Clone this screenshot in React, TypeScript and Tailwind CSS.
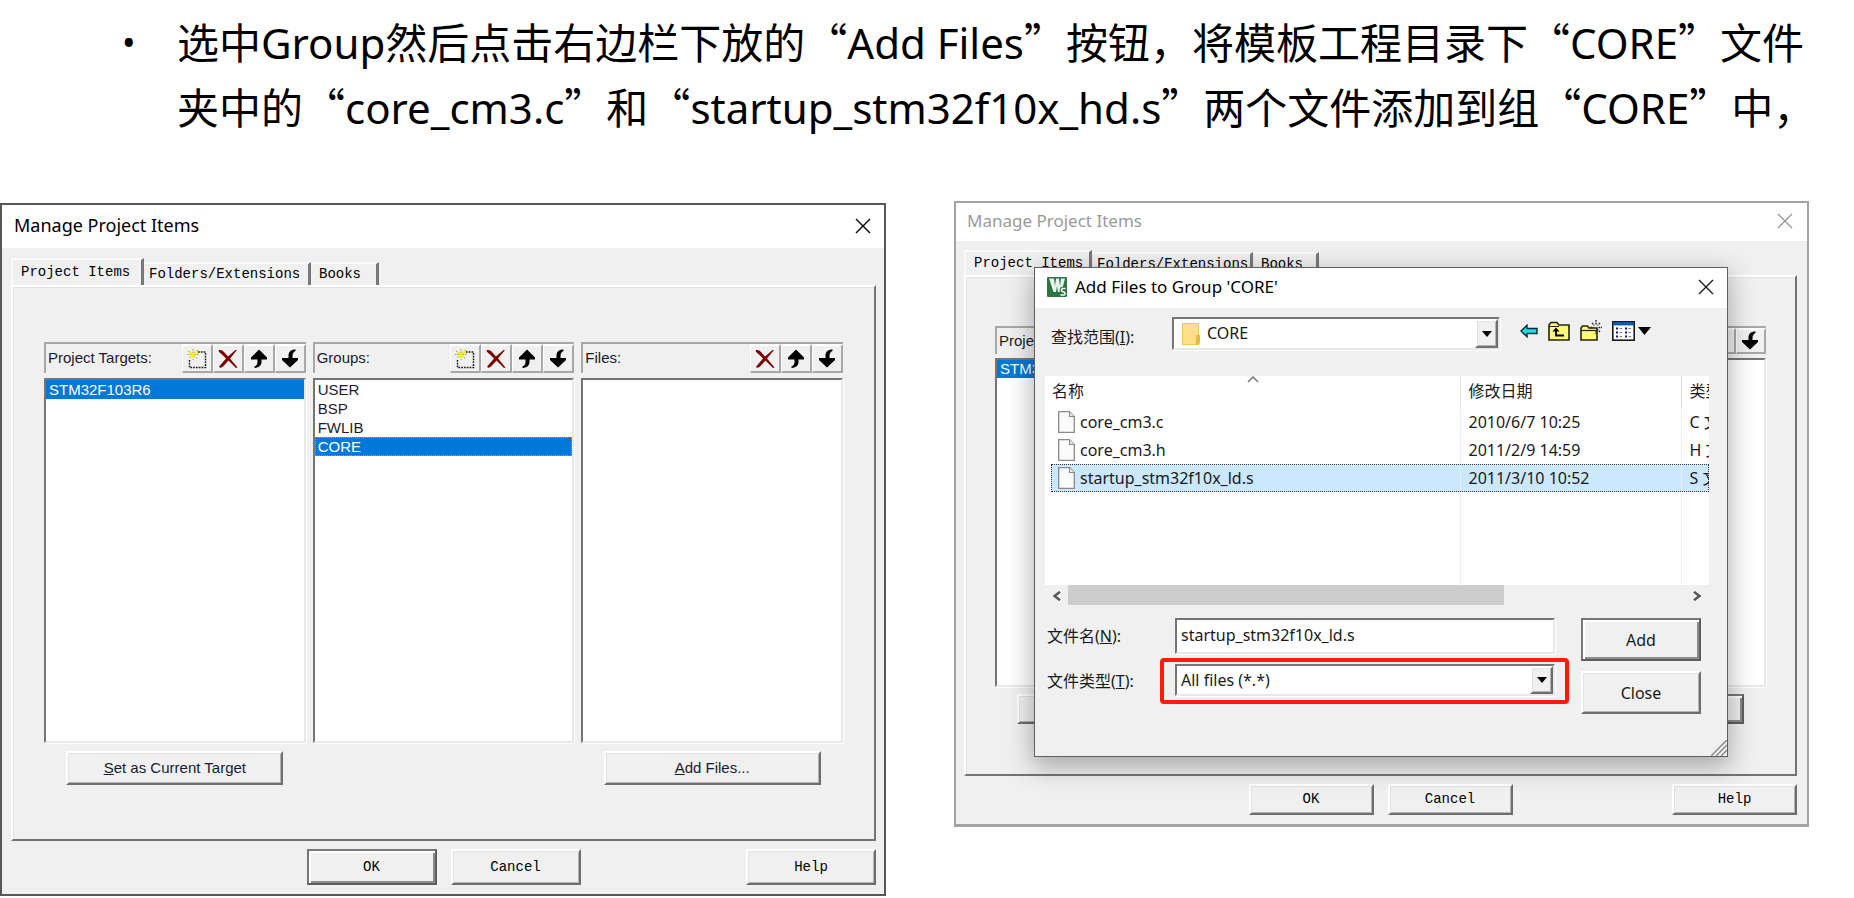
import React from "react";

const UI = "font-['Noto_Sans','Noto_Sans_CJK_SC',sans-serif]";
const CJK = "font-['Noto_Sans_CJK_SC',sans-serif]";
const MONO = "font-['Liberation_Mono',monospace]";
const RAISED =
  "border-2 border-t-white border-l-white border-r-[#6e6e6e] border-b-[#6e6e6e] bg-[#f0f0f0] shadow-[inset_1px_1px_0_#e2e2e2,inset_-1px_-1px_0_#b4b4b4]";
const DEFAULT_BTN =
  "border-2 border-t-[#777] border-l-[#777] border-r-[#5e5e5e] border-b-[#5e5e5e] bg-[#f0f0f0] shadow-[inset_2px_2px_0_#fff,inset_-2px_-2px_0_#8c8c8c]";
const SUNKEN =
  "border-2 border-t-[#757575] border-l-[#757575] border-r-[#e8e8e8] border-b-[#e8e8e8] bg-white shadow-[1px_1px_0_#fff]";

function CloseIcon() {
  return (
    <svg viewBox="0 0 16 16" className="size-4" fill="none" stroke="currentColor" strokeWidth="1.4" aria-hidden="true">
      <path d="M1 1 15 15M15 1 1 15" />
    </svg>
  );
}

function NewIcon() {
  return (
    <svg viewBox="0 0 20 20" className="size-5" fill="none" aria-hidden="true">
      <path d="M11 3H18.500V18.500H2.500V10" stroke="#222" strokeWidth="1.500" strokeDasharray="1.800 1" />
      <path d="M1 2 11 10M6 0V11M11 1 2 9M0 5.500H12" stroke="#8d8d6a" strokeWidth="0.9" strokeDasharray="1.5 1" />
      <path d="M2 2.500 8 8M10 2 3 8M6 4V9M8 3.500H11" stroke="#f4f01c" strokeWidth="1.9" />
    </svg>
  );
}

function DeleteIcon() {
  return (
    <svg viewBox="0 0 20 20" className="size-5" aria-hidden="true">
      <path
        d="M.5 1.500C2 .5 4.500 1.200 6 3L10 7.500 17.500 1 19 1 12 9.500 19.500 18.500 18 19 10.500 11.500 5 17.500C3.500 19 1 19 1.200 17.500L8 9.500 4 5.500C2.500 4 .5 3 .5 1.500Z"
        fill="#7d0000"
      />
    </svg>
  );
}

function UpIcon() {
  return (
    <svg viewBox="0 0 20 20" className="size-5" aria-hidden="true">
      <path d="M10 .5 18 8.500V10.500H12.500V13C12.500 16 10.500 18.500 5.500 19V17.500C7.500 16.500 8.500 15 8.500 13V10.500H2V8.500Z" fill="#000" />
    </svg>
  );
}

function DownIcon() {
  return (
    <svg viewBox="0 0 20 20" className="size-5" aria-hidden="true">
      <path d="M10 18.500 18 11V9H12.500V7C12.500 4.500 13.500 3 15.500 2V.5C10.500 .5 8.500 3 8.500 7V9H2V11Z" fill="#000" />
    </svg>
  );
}

const TOOLS = {
  new: { label: "New", icon: <NewIcon /> },
  del: { label: "Delete", icon: <DeleteIcon /> },
  up: { label: "Move up", icon: <UpIcon /> },
  down: { label: "Move down", icon: <DownIcon /> },
};
type Tool = keyof typeof TOOLS;

function Column({
  title,
  tools,
  items,
  selected,
  focused,
  compact,
  action,
}: {
  title: string;
  tools: Tool[];
  items: string[];
  selected?: string;
  focused?: boolean;
  compact?: boolean;
  action?: React.ReactNode;
}) {
  return (
    <section className="flex min-w-0 flex-1 flex-col">
      <div
        className={`flex items-end justify-between border-t-2 border-l-2 border-[#a8a8a8] ${compact ? "h-[28px]" : "h-[31px]"}`}
      >
        <h3 className="self-center pl-[2px] whitespace-nowrap">{title}</h3>
        <div className="flex h-full">
          {tools.map((t) => (
            <button
              key={t}
              type="button"
              aria-label={TOOLS[t].label}
              className={`flex h-full items-center justify-center border-t-2 border-r-2 border-b-2 border-l border-t-white border-l-white border-r-[#a8a8a8] border-b-[#a8a8a8] ${compact ? "w-[30px]" : "w-[31px]"}`}
            >
              {TOOLS[t].icon}
            </button>
          ))}
        </div>
      </div>
      <ul
        role="listbox"
        aria-label={title}
        className={`${SUNKEN} ${compact ? "mt-[4px] h-[329px] leading-[18px]" : "mt-[5px] h-[365px] leading-[19px]"}`}
      >
        {items.map((it) => (
          <li
            key={it}
            role="option"
            aria-selected={it === selected}
            className={`pl-[3px] ${it === selected ? "bg-[#0078d7] text-white" : ""} ${focused && it === selected ? "outline-1 -outline-offset-1 outline-[#e08a3c] outline-dotted" : ""}`}
          >
            {it}
          </li>
        ))}
      </ul>
      <div className={`flex justify-center ${compact ? "h-[37px] pt-[7px]" : "h-[42px] pt-[8px]"}`}>{action}</div>
    </section>
  );
}

function ManageDialog({
  compact,
  groups,
  selectedGroup,
  children,
}: {
  compact?: boolean;
  groups: string[];
  selectedGroup?: string;
  children?: React.ReactNode;
}) {
  const tabs = ["Project Items", "Folders/Extensions", "Books"];
  const footBtn = `${compact ? "h-[31px] w-[125px]" : "h-[36px] w-[130px]"}`;
  const rowBtn = `${compact ? "w-[209px]" : "w-[217px]"} h-full`;
  return (
    <section
      aria-label="Manage Project Items"
      className={`relative border-2 bg-[#f0f0f0] ${compact ? "mt-0 border-b-[3px] border-[#a3a3a3]" : "mt-[2px] border-[#585858]"}`}
    >
      <header
        className={`flex items-center justify-between bg-white ${UI} ${compact ? "h-[38px] pr-[14px] pb-[2px] pl-[11px] text-[17px] text-[#9a9a9a]" : "h-[43px] pr-[13px] pb-[2px] pl-[12px] text-[18px] text-black"}`}
      >
        <h2>Manage Project Items</h2>
        <button type="button" aria-label="Close">
          <CloseIcon />
        </button>
      </header>
      <div className={compact ? "pt-[9px] pr-[10px] pl-[8px]" : "pt-[10px] pr-[8px] pl-[9px]"}>
        <div role="tablist" className={`flex items-end text-[14px] ${MONO} ${compact ? "h-[25px]" : "h-[27px]"}`}>
          {tabs.map((t, i) => (
            <button
              key={t}
              type="button"
              role="tab"
              aria-selected={i === 0}
              className={`border-t-2 border-r-[3px] border-t-[#fafafa] border-r-[#787878] bg-[#f0f0f0] text-left whitespace-nowrap ${
                i === 0
                  ? `z-10 h-full self-start border-l-2 border-l-[#fafafa] pl-[8px] ${compact ? "w-[128px]" : "w-[133px]"}`
                  : i === 1
                    ? `h-[23px] pl-[5px] ${compact ? "w-[161px]" : "w-[167px]"}`
                    : `h-[23px] pl-[8px] ${compact ? "w-[66px]" : "w-[68px]"}`
              }`}
            >
              {t}
            </button>
          ))}
        </div>
        <div
          role="tabpanel"
          className={`border-2 border-t-white border-r-[#747474] border-b-[#747474] border-l-white shadow-[inset_1px_1px_0_#e2e2e2] ${compact ? "px-[29px] pt-[49px] pb-[50px]" : "px-[31px] pt-[55px] pb-[54px]"}`}
        >
          <div className="flex gap-[7px] font-['Liberation_Sans',Arial,sans-serif] text-[15px] text-[#1b1b2b]">
            <Column
              compact={compact}
              title="Project Targets:"
              tools={["new", "del", "up", "down"]}
              items={["STM32F103R6"]}
              selected="STM32F103R6"
              action={
                <button type="button" className={`${rowBtn} ${RAISED}`}>
                  <u>S</u>et as Current Target
                </button>
              }
            />
            <Column
              compact={compact}
              title="Groups:"
              tools={["new", "del", "up", "down"]}
              items={groups}
              selected={selectedGroup}
              focused
            />
            <Column
              compact={compact}
              title="Files:"
              tools={["del", "up", "down"]}
              items={[]}
              action={
                <button type="button" className={`${rowBtn} ${compact ? DEFAULT_BTN : RAISED}`}>
                  <u>A</u>dd Files...
                </button>
              }
            />
          </div>
        </div>
        <footer className={`grid grid-cols-[1fr_auto_1fr] pt-[8px] pb-[9px] text-[14px] ${MONO}`}>
          <div className="col-start-2 flex gap-[14px]">
            <button type="button" className={`${footBtn} ${compact ? RAISED : DEFAULT_BTN}`}>
              OK
            </button>
            <button type="button" className={`${footBtn} ${RAISED}`}>
              Cancel
            </button>
          </div>
          <button type="button" className={`justify-self-end ${footBtn} ${RAISED}`}>
            Help
          </button>
        </footer>
      </div>
      {children}
    </section>
  );
}

function DropArrow() {
  return (
    <span className={`pointer-events-none flex w-[23px] shrink-0 items-center justify-center self-stretch ${RAISED}`}>
      <svg viewBox="0 0 10 6" className="h-[6px] w-[10px]" aria-hidden="true">
        <path d="M0 0H10L5 6Z" fill="#000" />
      </svg>
    </span>
  );
}

function FileIcon() {
  return (
    <svg viewBox="0 0 17 22" className="h-[22px] w-[17px] shrink-0" aria-hidden="true">
      <path d="M.7.7H11.500L16.300 5.500V21.300H.7Z" fill="#fbfbfb" stroke="#8a8a8a" strokeWidth="1.300" />
      <path d="M11.500.7V5.500H16.300" fill="#e9e9e9" stroke="#8a8a8a" strokeWidth="1.100" />
    </svg>
  );
}

function NavIcons() {
  return (
    <div className="flex items-center gap-[10px] pb-[6px]">
      <button type="button" aria-label="Back">
        <svg viewBox="0 0 18 14" className="h-[14px] w-[18px]" aria-hidden="true">
          <path d="M1 7 7 1.200V4.500H17V9.500H7V12.800Z" fill="#12e4ee" stroke="#0a2a30" strokeWidth="1.400" />
        </svg>
      </button>
      <button type="button" aria-label="Up one level">
        <svg viewBox="0 0 22 20" className="h-[20px] w-[22px]" aria-hidden="true">
          <path d="M1 19V4L3 1.500H9L11 4H21V19Z" fill="#fbf87a" stroke="#26260a" strokeWidth="1.600" />
          <path d="M1 5.500H11" stroke="#26260a" strokeWidth="1" />
          <path d="M4.500 10.500 8 6.500 11.500 10.500Z" fill="#000" />
          <path d="M8 9V14.500H16" fill="none" stroke="#000" strokeWidth="1.800" />
        </svg>
      </button>
      <button type="button" aria-label="New folder">
        <svg viewBox="0 0 22 22" className="h-[22px] w-[22px]" aria-hidden="true">
          <path d="M1 20V8L2.500 6H7.500L9 8H17V20Z" fill="#fbf87a" stroke="#26260a" strokeWidth="1.600" />
          <path d="M1 10.500H17" stroke="#26260a" strokeWidth="1.200" />
          <path
            d="M16 0V5M16 10V14M10.500 7.500H13.500M18.500 7.500H22M12 3 14.500 5.500M20 3 17.500 5.500M20 12 17.500 9.500"
            stroke="#222"
            strokeWidth="1.300"
            strokeDasharray="1.800 .8"
          />
        </svg>
      </button>
      <button type="button" aria-label="View menu" className="flex items-center gap-[3px]">
        <svg viewBox="0 0 23 20" className="h-[20px] w-[23px]" aria-hidden="true">
          <rect x=".8" y=".8" width="21.400" height="18.400" fill="#fff" stroke="#1a1a1a" strokeWidth="1.600" />
          <rect x="1" y="1" width="21" height="3.400" fill="#0b57a8" />
          <g stroke="#15157a" strokeWidth="2.200">
            <path d="M4 7.500H6M4 11.500H6M4 15.500H6M13 7.500H15M13 11.500H15M13 15.500H15" />
          </g>
          <g stroke="#777" strokeWidth="1.200">
            <path d="M7.500 7.500H10M7.500 11.500H10M7.500 15.500H10M16.500 7.500H19M16.500 11.500H19M16.500 15.500H19" />
          </g>
        </svg>
        <svg viewBox="0 0 13 8" className="h-[8px] w-[13px]" aria-hidden="true">
          <path d="M0 0H13L6.500 8Z" fill="#000" />
        </svg>
      </button>
    </div>
  );
}

function AddFilesDialog() {
  const files = [
    { name: "core_cm3.c", date: "2010/6/7 10:25", type: "C 文件" },
    { name: "core_cm3.h", date: "2011/2/9 14:59", type: "H 文件" },
    { name: "startup_stm32f10x_ld.s", date: "2011/3/10 10:52", type: "S 文件", selected: true },
  ];
  return (
    <section
      role="dialog"
      aria-label="Add Files to Group 'CORE'"
      className={`absolute top-[64px] right-[79px] left-[78px] z-20 border border-[#5f5f5f] bg-[#f0f0f0] text-[16px] text-[#1a1a1a] shadow-[0_8px_24px_2px_rgba(0,0,0,0.3)] ${UI}`}
    >
      <header className="flex h-[40px] items-center bg-white pr-[13px] pb-[2px] pl-[12px]">
        <svg viewBox="0 0 20 20" className="size-5" aria-hidden="true">
          <rect width="20" height="20" rx="1" fill="#2c7442" />
          <path d="M2 1.500H7L8 9.500 9 1.500H12L13 9.500 14 1.500H18L14.500 15H11L10 9 9 15H6.500Z" fill="#e8f3eb" />
          <path d="M18.500 11.500H16C13.800 11.500 13.800 14.600 16 14.800C18.800 15 18.500 18 16.500 18H13.500" fill="none" stroke="#2c7442" strokeWidth="3.400" />
          <path d="M18.500 11.500H16C14 11.500 14 14.600 16 14.800C18.800 15 18.500 18 16.500 18H13.500" fill="none" stroke="#fff" strokeWidth="1.500" />
        </svg>
        <h2 className="flex-1 pl-2 text-[17px] text-black">Add Files to Group 'CORE'</h2>
        <button type="button" aria-label="Close">
          <CloseIcon />
        </button>
      </header>

      <div className="flex items-center pt-[9px] pl-[16px]">
        <label htmlFor="look-in" className="w-[121px] pt-[6px] whitespace-nowrap">
          查找范围(<u>I</u>):
        </label>
        <div className={`mr-[20px] flex h-[33px] w-[328px] items-center ${SUNKEN}`}>
          <svg viewBox="0 0 18 22" className="ml-[8px] h-[22px] w-[18px] shrink-0" aria-hidden="true">
            <path d="M0 0H17V22H0Z" fill="#ffe08a" />
            <path d="M.5.5H16.500V21.500H.5Z" fill="none" stroke="#efc95a" />
            <path d="M14 12H18V20L16 22H14Z" fill="#e8b93c" />
          </svg>
          <select id="look-in" className="min-w-0 flex-1 appearance-none bg-transparent pb-[2px] pl-[7px] outline-none">
            <option>CORE</option>
          </select>
          <DropArrow />
        </div>
        <NavIcons />
      </div>

      <div className="mt-[26px] mr-[18px] ml-[10px]">
        <div className="relative overflow-hidden bg-white pl-[6px]">
          <svg viewBox="0 0 12 7" className="absolute top-0 left-[202px] h-[7px] w-[12px]" aria-hidden="true">
            <path d="M1 6 6 1 11 6" fill="none" stroke="#777" strokeWidth="1.500" />
          </svg>
          <table className="w-full table-fixed border-collapse text-left whitespace-nowrap">
            <colgroup>
              <col />
              <col className="w-[221px]" />
              <col className="w-[28px]" />
            </colgroup>
            <thead>
              <tr className="h-[32px]">
                <th className="border-r border-[#dedede] p-0 pb-[2px] pl-[1px] font-normal">名称</th>
                <th className="border-r border-[#dedede] p-0 pb-[2px] pl-[8px] font-normal">修改日期</th>
                <th className="overflow-hidden p-0 pb-[2px] pl-[8px] font-normal">类型</th>
              </tr>
            </thead>
            <tbody>
              {files.map((f) => (
                <tr
                  key={f.name}
                  aria-selected={!!f.selected}
                  className={`h-[28px] ${f.selected ? "bg-[#cce8ff] outline-1 -outline-offset-1 outline-[#333] outline-dotted" : ""}`}
                >
                  <td className="border-r border-[#e6f1fb] p-0 pl-[7px]">
                    <span className="flex items-center gap-[5px]">
                      <FileIcon />
                      {f.name}
                    </span>
                  </td>
                  <td className="border-r border-[#e6f1fb] p-0 pl-[8px]">{f.date}</td>
                  <td className="overflow-hidden p-0 pl-[8px]">{f.type}</td>
                </tr>
              ))}
              <tr className="h-[93px]" aria-hidden="true">
                <td className="border-r border-[#e6f1fb]" />
                <td className="border-r border-[#e6f1fb]" />
                <td />
              </tr>
            </tbody>
          </table>
        </div>
        <div className="flex h-[21px] items-center text-[#555]">
          <button type="button" aria-label="Scroll left" className="flex w-[23px] justify-center">
            <svg viewBox="0 0 9 10" className="h-[10px] w-[9px]" fill="none" stroke="currentColor" strokeWidth="2.400" aria-hidden="true">
              <path d="M8 .8 2.500 5 8 9.200" />
            </svg>
          </button>
          <div className="flex h-full flex-1">
            <div className="h-[20px] w-[70.5%] bg-[#cdcdcd]" />
          </div>
          <button type="button" aria-label="Scroll right" className="flex w-[23px] justify-center">
            <svg viewBox="0 0 9 10" className="h-[10px] w-[9px]" fill="none" stroke="currentColor" strokeWidth="2.400" aria-hidden="true">
              <path d="M1 .8 6.500 5 1 9.200" />
            </svg>
          </button>
        </div>
      </div>

      <div className="flex pt-[12px] pr-[26px] pb-[42px] pl-[12px]">
        <div className="flex min-w-0 flex-1 flex-col">
          <div className="flex h-[36px] items-center">
            <label htmlFor="file-name" className="w-[128px] shrink-0 whitespace-nowrap">
              文件名(<u>N</u>):
            </label>
            <input
              id="file-name"
              defaultValue="startup_stm32f10x_ld.s"
              className={`mr-[26px] h-full min-w-0 flex-1 pb-[3px] pl-[4px] outline-none ${SUNKEN}`}
            />
          </div>
          <div className="mt-[4px] flex items-center">
            <label htmlFor="file-type" className="w-[113px] shrink-0 whitespace-nowrap">
              文件类型(<u>T</u>):
            </label>
            <div className="mr-[12px] flex min-w-0 flex-1 rounded-[4px] border-4 border-[#ff1a0a] pt-[2px] pr-[10px] pb-[4px] pl-[11px]">
              <div className={`flex h-[32px] min-w-0 flex-1 items-center ${SUNKEN}`}>
                <select id="file-type" className="min-w-0 flex-1 appearance-none bg-transparent pl-[4px] outline-none">
                  <option>All files (*.*)</option>
                </select>
                <DropArrow />
              </div>
            </div>
          </div>
        </div>
        <div className="flex w-[120px] flex-col gap-[10px]">
          <button type="button" className={`h-[43px] ${DEFAULT_BTN}`}>
            Add
          </button>
          <button type="button" className={`h-[43px] ${RAISED}`}>
            Close
          </button>
        </div>
      </div>
      <svg viewBox="0 0 16 16" className="absolute right-0 bottom-0 size-4" stroke="#8a8a8a" strokeWidth="1.500" aria-hidden="true">
        <path d="M0 16 16 0M5 16 16 5M10 16 16 10" />
      </svg>
    </section>
  );
}

function Quoted({ children }: { children: React.ReactNode }) {
  return (
    <>
      <span className={`leading-none ${CJK}`}>“</span>
      {children}
      <span className={`leading-none ${CJK}`}>”</span>
    </>
  );
}

export default function App() {
  return (
    <main lang="zh-CN" className="bg-white">
      <ul className={`pt-[10px] pl-[122px] text-[42px] leading-[65px] text-black ${UI}`}>
        <li className="flex whitespace-nowrap">
          <span className="w-[55px] shrink-0 text-[36px]">•</span>
          <p>
            选中Group然后点击右边栏下放的<Quoted>Add Files</Quoted>按钮，将模板工程目录下<Quoted>CORE</Quoted>文件
            <br />
            夹中的<Quoted>core_cm3.c</Quoted>和<Quoted>startup_stm32f10x_hd.s</Quoted>两个文件添加到组
            <Quoted>CORE</Quoted>中，
          </p>
        </li>
      </ul>
      <div className="grid grid-cols-[886fr_855fr] items-start gap-x-[68px] pt-[61px] pr-[45px]">
        <ManageDialog groups={["USER", "BSP", "FWLIB", "CORE"]} selectedGroup="CORE" />
        <ManageDialog compact groups={["USER", "BSP", "FWLIB", "CORE"]} selectedGroup="CORE">
          <AddFilesDialog />
        </ManageDialog>
      </div>
    </main>
  );
}
